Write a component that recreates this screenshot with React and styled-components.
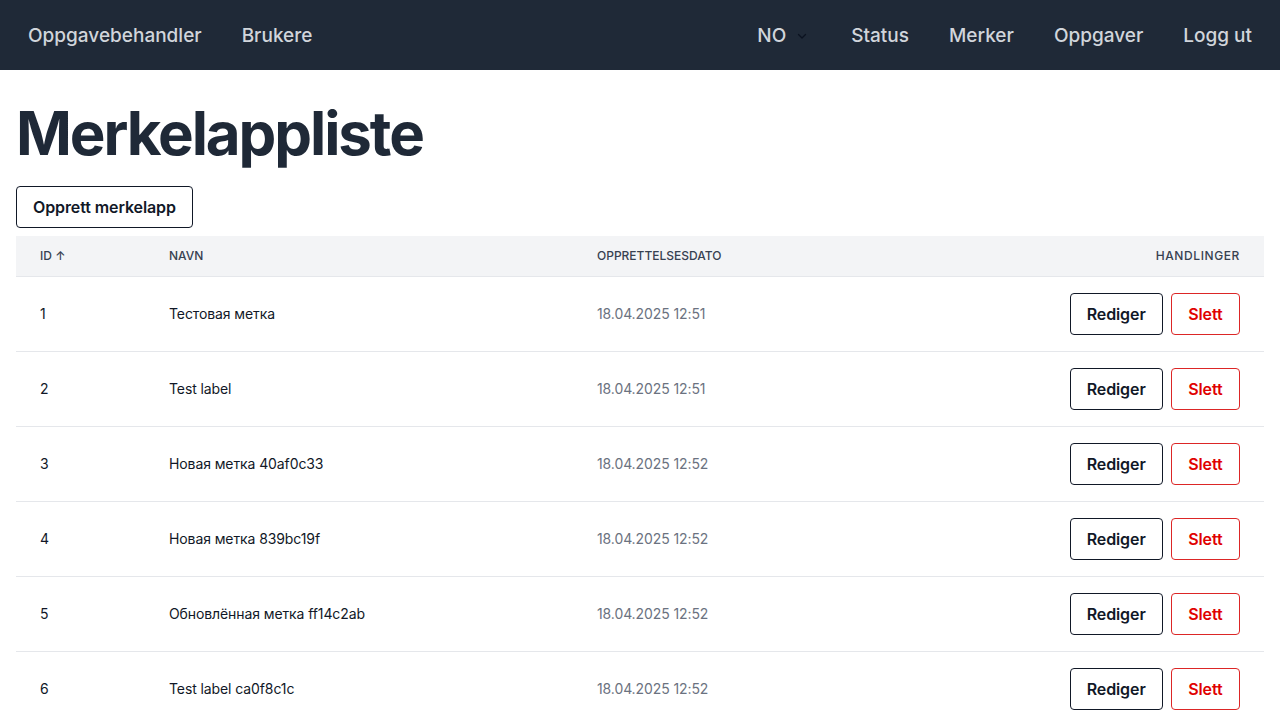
import React from "react";
import styled, { createGlobalStyle } from "styled-components";

const Global = createGlobalStyle`
  * { box-sizing: border-box; }
  body { margin: 0; font-family: Inter, "Noto Sans", sans-serif; background: #fff; color: #111827; }
`;

const Nav = styled.nav`
  height: 70px;
  background: #1f2937;
  display: flex;
  align-items: center;
  justify-content: space-between;
  padding: 1px 28px 0;
`;

const NavGroup = styled.div`
  display: flex;
  align-items: center;
  gap: 40px;
`;

const NavLink = styled.a`
  color: #d1d5db;
  font-size: 19px;
  font-weight: 500;
  text-decoration: none;
  line-height: 28px;
`;

const Lang = styled.div`
  display: flex;
  align-items: center;
  gap: 10px;
  color: #d1d5db;
  font-size: 19px;
  font-weight: 500;
  margin-right: 3px;
  padding-left: 3px;
`;

const Main = styled.main`
  padding: 33px 16px 0;
`;

const Title = styled.h1`
  margin: 0 0 23px;
  font-size: 60px;
  line-height: 60px;
  font-weight: 700;
  color: #1f2937;
  letter-spacing: -2.1px;
`;

const Button = styled.button`
  font-family: inherit;
  font-size: 16px;
  font-weight: 600;
  height: 42px;
  padding: 0 ${(p) => (p.$danger ? "16.5px" : "16px")};
  background: #fff;
  border-radius: 4px;
  border: 1px solid ${(p) => (p.$danger ? "#dc2626" : "#111827")};
  color: ${(p) => (p.$danger ? "#e00000" : "#111827")};
  letter-spacing: -0.1px;
  cursor: pointer;
`;

const Table = styled.table`
  margin-top: 8px;
  width: 100%;
  border-collapse: collapse;
  font-size: 14px;
`;

const Th = styled.th`
  height: 40px;
  padding: 0 24px;
  background: #f3f4f6;
  text-align: ${(p) => p.$align || "left"};
  font-size: 12px;
  font-weight: 500;
  text-transform: uppercase;
  letter-spacing: ${(p) => (p.$wide ? "0.6px" : "0")};
  color: #374151;
  border-bottom: 1px solid #e5e7eb;
  width: ${(p) => p.$w || "auto"};
`;

const Tr = styled.tr`
  border-bottom: 1px solid #e5e7eb;
`;

const Td = styled.td`
  height: 75px;
  padding: 0 24px;
  color: ${(p) => (p.$muted ? "#6b7280" : "#111827")};
  text-align: ${(p) => p.$align || "left"};
  letter-spacing: -0.1px;
`;

const Actions = styled.div`
  display: inline-flex;
  gap: 8px;
`;

const rows = [
  [1, "Тестовая метка", "18.04.2025 12:51"],
  [2, "Test label", "18.04.2025 12:51"],
  [3, "Новая метка 40af0c33", "18.04.2025 12:52"],
  [4, "Новая метка 839bc19f", "18.04.2025 12:52"],
  [5, "Обновлённая метка ff14c2ab", "18.04.2025 12:52"],
  [6, "Test label ca0f8c1c", "18.04.2025 12:52"],
];

export default function App() {
  return (
    <>
      <Global />
      <Nav>
        <NavGroup>
          <NavLink>Oppgavebehandler</NavLink>
          <NavLink>Brukere</NavLink>
        </NavGroup>
        <NavGroup>
          <Lang>
            NO
            <svg width="12" height="12" viewBox="0 0 12 12" fill="none">
              <path d="M2.5 4.5L6 8L9.5 4.5" stroke="#0b1220" strokeWidth="1.3" strokeLinecap="round" strokeLinejoin="round" />
            </svg>
          </Lang>
          <NavLink>Status</NavLink>
          <NavLink>Merker</NavLink>
          <NavLink>Oppgaver</NavLink>
          <NavLink>Logg ut</NavLink>
        </NavGroup>
      </Nav>
      <Main>
        <Title>Merkelappliste</Title>
        <Button>Opprett merkelapp</Button>
        <Table>
          <thead>
            <tr>
              <Th $w="129px">ID ↑</Th>
              <Th $w="428px">Navn</Th>
              <Th>Opprettelsesdato</Th>
              <Th $align="right" $wide>Handlinger</Th>
            </tr>
          </thead>
          <tbody>
            {rows.map(([id, name, date]) => (
              <Tr key={id}>
                <Td>{id}</Td>
                <Td>{name}</Td>
                <Td $muted>{date}</Td>
                <Td $align="right">
                  <Actions>
                    <Button>Rediger</Button>
                    <Button $danger>Slett</Button>
                  </Actions>
                </Td>
              </Tr>
            ))}
          </tbody>
        </Table>
      </Main>
    </>
  );
}
